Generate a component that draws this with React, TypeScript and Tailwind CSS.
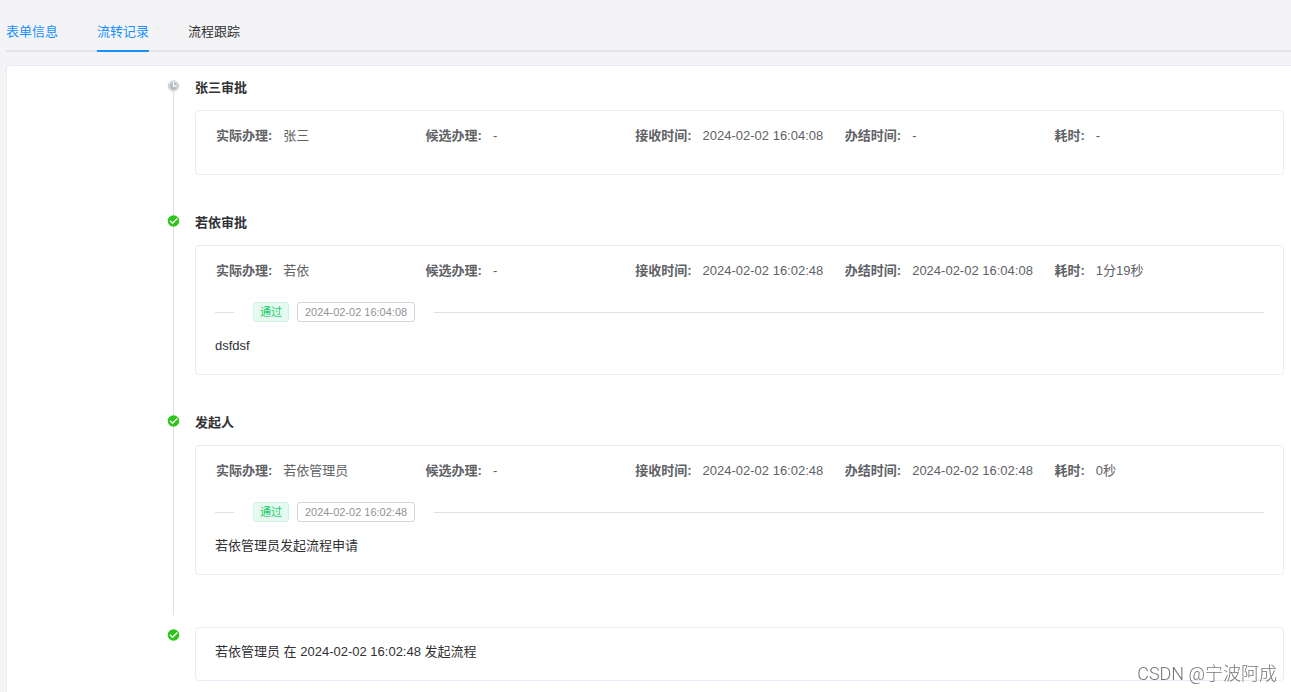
import React, { useState } from "react";

type Comment = {
  time: string;
  message: string;
};

type RecordItem = {
  title: string;
  assignee: string;
  candidate: string;
  createTime: string;
  finishTime: string;
  duration: string;
  comment?: Comment;
};

const tabs = [
  { name: "表单信息", color: "text-[#1890ff]" },
  { name: "流转记录", color: "text-[#1890ff]" },
  { name: "流程跟踪", color: "text-[#303133]" },
];

const records: RecordItem[] = [
  {
    title: "张三审批",
    assignee: "张三",
    candidate: "-",
    createTime: "2024-02-02 16:04:08",
    finishTime: "-",
    duration: "-",
  },
  {
    title: "若依审批",
    assignee: "若依",
    candidate: "-",
    createTime: "2024-02-02 16:02:48",
    finishTime: "2024-02-02 16:04:08",
    duration: "1分19秒",
    comment: { time: "2024-02-02 16:04:08", message: "dsfdsf" },
  },
  {
    title: "发起人",
    assignee: "若依管理员",
    candidate: "-",
    createTime: "2024-02-02 16:02:48",
    finishTime: "2024-02-02 16:02:48",
    duration: "0秒",
    comment: { time: "2024-02-02 16:02:48", message: "若依管理员发起流程申请" },
  },
];

const CheckIcon: React.FC = () => (
  <svg className="w-[13px] h-3 shrink-0" viewBox="0 0 13 12" aria-hidden="true">
    <circle cx="6.5" cy="6" r="5.8" fill="#2bc418" />
    <path d="M2.9 5.8 5.5 8.2 10.3 3.5" fill="none" stroke="#fff" strokeWidth="1.4" />
  </svg>
);

const ClockIcon: React.FC = () => (
  <svg className="w-[13px] h-3 shrink-0" viewBox="0 0 13 12" aria-hidden="true">
    <circle cx="6.5" cy="6" r="5.3" fill="#fff" stroke="#c6ced0" strokeWidth="1" />
    <circle cx="6.5" cy="6" r="4.3" fill="#b3bfc3" />
    <path d="M6.5 2.6v3.6h3.2" fill="none" stroke="#fff" strokeWidth="1.2" />
  </svg>
);

const Field: React.FC<{ label: string; value: string }> = ({ label, value }) => (
  <div className="flex gap-[11px] whitespace-nowrap">
    <dt className="font-bold">{label}:</dt>
    <dd>{value}</dd>
  </div>
);

const CommentBlock: React.FC<{ comment: Comment }> = ({ comment }) => (
  <>
    <div className="flex items-center mt-[21px] mb-3.5">
      <span className="w-[19px] h-px bg-[#dcdfe6]" />
      <span className="ml-[19px] px-1.5 h-5 flex items-center rounded-[3px] border border-[#d0f5e0] bg-[#e7faf0] text-[11px] text-[#13ce66]">
        通过
      </span>
      <span className="ml-2 px-[7px] h-5 flex items-center rounded-[3px] border border-[#d3d4d6] bg-white text-[11px] text-[#909399]">
        {comment.time}
      </span>
      <span className="ml-[19px] flex-1 h-px bg-[#dcdfe6]" />
    </div>
    <p>{comment.message}</p>
  </>
);

const TimelineItem: React.FC<{ record: RecordItem }> = ({ record }) => (
  <li className="flex gap-[15px]">
    <div className="flex flex-col items-center">
      {record.comment ? <CheckIcon /> : <ClockIcon />}
      <span className="w-px flex-1 bg-[#dfe0ea]" />
    </div>
    <div className="flex-1 pb-10">
      <h3 className="font-bold leading-4">{record.title}</h3>
      <div className="mt-3.5 px-[19px] pt-[15px] pb-[18px] rounded border border-[#e6ebf5]">
        <dl className="grid grid-cols-5 mb-[10px] pl-px text-[#606266]">
          <Field label="实际办理" value={record.assignee} />
          <Field label="候选办理" value={record.candidate} />
          <Field label="接收时间" value={record.createTime} />
          <Field label="办结时间" value={record.finishTime} />
          <Field label="耗时" value={record.duration} />
        </dl>
        {record.comment && <CommentBlock comment={record.comment} />}
      </div>
    </div>
  </li>
);

const App: React.FC = () => {
  const [active, setActive] = useState("流转记录");

  return (
    <div className="min-h-screen flex flex-col pl-1.5 pt-3.5 bg-[#f4f4f7] text-[13px] leading-5 text-[#303133] font-['Liberation_Sans','Noto_Sans_CJK_SC',sans-serif]">
      <div role="tablist" className="flex gap-[39px] border-b-2 border-[#dfe4ed]">
        {tabs.map((tab) => (
          <button
            key={tab.name}
            role="tab"
            aria-selected={active === tab.name}
            onClick={() => setActive(tab.name)}
            className={`-mb-0.5 border-b-2 leading-9 ${tab.color} ${
              active === tab.name ? "border-[#1890ff]" : "border-transparent"
            }`}
          >
            {tab.name}
          </button>
        ))}
      </div>

      <main className="flex-1 mt-[13px] pt-3.5 pl-40 pr-[7px] rounded-tl border-l border-t border-[#e6ebf5] bg-white">
        <ul>
          {records.map((record) => (
            <TimelineItem key={record.title} record={record} />
          ))}
          <li className="flex gap-[15px] mt-3">
            <div className="pt-0.5">
              <CheckIcon />
            </div>
            <div className="flex-1 px-[19px] pt-3.5 pb-[18px] rounded border border-[#e6ebf5]">
              若依管理员 在 2024-02-02 16:02:48 发起流程
            </div>
          </li>
        </ul>
      </main>

      <span className="fixed right-3.5 bottom-1.5 text-[18px] leading-6 font-light text-[#777] font-['Roboto','Noto_Sans_CJK_SC',sans-serif]">
        CSDN @宁波阿成
      </span>
    </div>
  );
};

export default App;
